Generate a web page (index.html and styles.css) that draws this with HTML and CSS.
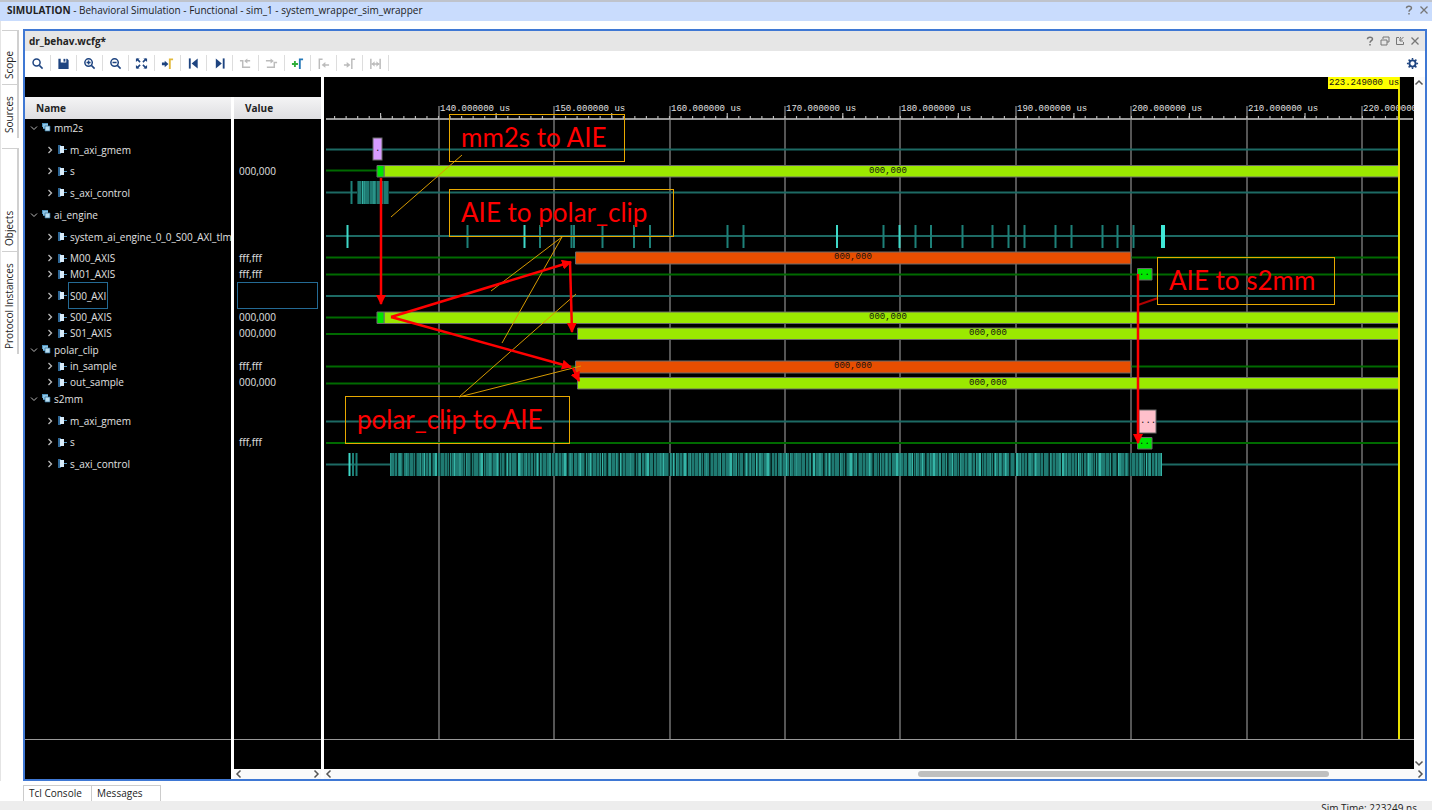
FILE: index.html
```html
<!DOCTYPE html>
<html lang="en">
<head>
<meta charset="utf-8">
<title>Behavioral Simulation</title>
<link rel="stylesheet" href="styles.css">
</head>
<body>
<svg class="defs" aria-hidden="true">
  <symbol id="i-down" viewBox="0 0 10 10"><path d="M2 3.5l3 3 3-3" fill="none" stroke="currentColor"/></symbol>
  <symbol id="i-right" viewBox="0 0 10 10"><path d="M3.500 2l3 3-3 3" fill="none" stroke="currentColor" stroke-width="1.300"/></symbol>
  <symbol id="i-group" viewBox="0 0 9 9"><path d="M0 0h6v2H3v4H1V4H0z" fill="#4f93bd"/><path d="M1 1h5v4H1z" fill="#8cc4e6"/><path d="M3 3h5v5H3z" fill="#b9def2" stroke="#2d6a94" stroke-width=".7"/></symbol>
  <symbol id="i-bus" viewBox="0 0 9 9"><path d="M0 0h3v9H0z" fill="#2f6795"/><path d="M2 1h4v7H2z" fill="#d9ecfa"/><path d="M6 4h3v1H6z" fill="#4f93bd"/></symbol>
  <symbol id="i-x" viewBox="0 0 10 10"><path d="M1.500 1.500l7 7M8.500 1.500l-7 7" stroke="currentColor" stroke-width="1.300"/></symbol>
  <symbol id="i-help" viewBox="0 0 10 10"><path d="M2.500 3.200C2.500.5 7.500.5 7.500 3 7.500 4.700 5 4.700 5 6.800M5 8v1.500" fill="none" stroke="currentColor" stroke-width="1.500"/></symbol>
</svg>

<header class="app-title">
  <h1><b>SIMULATION</b> - Behavioral Simulation - Functional - sim_1 - system_wrapper_sim_wrapper</h1>
  <button class="win" aria-label="Help"><svg><use href="#i-help"/></svg></button>
  <button class="win" aria-label="Close"><svg><use href="#i-x"/></svg></button>
</header>

<div class="workspace">
  <nav class="rail" aria-label="Side panels">
    <button class="vtab short">Scope</button>
    <button class="vtab short">Sources</button>
    <button class="vtab long split">Objects</button>
    <button class="vtab long">Protocol Instances</button>
  </nav>

  <main class="panel">
    <header class="panel-title">
      <h2>dr_behav.wcfg*</h2>
      <button class="win" aria-label="Help"><svg><use href="#i-help"/></svg></button>
      <button class="win" aria-label="Restore"><svg viewBox="0 0 10 10"><path d="M3 3V1h6v5H7M1 4h6v5H1z" fill="none" stroke="currentColor"/></svg></button>
      <button class="win" aria-label="Float"><svg viewBox="0 0 10 10"><path d="M4 1.500H1.500v7h7V6M5 1.500h1M8.500 1L5 4.500M5 2v3h3" fill="none" stroke="currentColor"/></svg></button>
      <button class="win" aria-label="Close"><svg><use href="#i-x"/></svg></button>
    </header>

    <div class="toolbar" role="toolbar">
      <button aria-label="Find"><svg viewBox="0 0 14 14"><circle cx="6" cy="6" r="3.800"/><path d="M9 9l3.500 3.500"/></svg></button>
      <button aria-label="Save"><svg viewBox="0 0 14 14"><path class="fill" d="M1.500 2H4v4h6V2h1l1.500 1.500V13h-11z"/><path class="fill" d="M7 2h2v3H7z"/></svg></button>
      <button aria-label="Zoom in"><svg viewBox="0 0 14 14"><circle cx="6" cy="6" r="4"/><path d="M9 9l3.500 3.500M3.800 6h4.400M6 3.800v4.400"/></svg></button>
      <button aria-label="Zoom out"><svg viewBox="0 0 14 14"><circle cx="6" cy="6" r="4"/><path d="M9 9l3.500 3.500M3.800 6h4.400"/></svg></button>
      <button aria-label="Zoom fit"><svg viewBox="0 0 14 14"><path d="M2 2l3.500 3.500M12 2L8.500 5.500M2 12l3.500-3.500M12 12L8.500 8.500"/><path class="fill" d="M1 1.500h4l-4 4zM13 1.500H9l4 4zM1 12.500h4l-4-4zM13 12.500H9l4-4z"/></svg></button>
      <button aria-label="Go to cursor"><svg viewBox="0 0 14 14"><path class="fill" d="M1 6h3V4l4 3.500L4 11V9H1z"/><path class="gold" d="M9.500 13V2.500H13"/></svg></button>
      <button aria-label="Previous transition"><svg viewBox="0 0 14 14"><path d="M3 1.500v11" class="thick"/><path class="fill" d="M11.500 1.500v11L5 7z"/></svg></button>
      <button aria-label="Next transition"><svg viewBox="0 0 14 14"><path d="M11.500 1.500v11" class="thick"/><path class="fill" d="M3 1.500v11L9.500 7z"/></svg></button>
      <button aria-label="Previous edge" disabled><svg viewBox="0 0 14 14"><path d="M1 4h3v7h8M7 4h5"/><path class="fill" d="M9 1.500v5.500L5.500 4.200z"/></svg></button>
      <button aria-label="Next edge" disabled><svg viewBox="0 0 14 14"><path d="M1 4h6M2 11h8V6h3"/><path class="fill" d="M6 1.500v5.500l3.500-2.800z"/></svg></button>
      <button aria-label="Add marker"><svg viewBox="0 0 14 14"><path class="green" d="M1 7.500h6.500M4.200 4.200v6.600"/><path class="blue" d="M9.500 13V2.500H13"/></svg></button>
      <button aria-label="Previous marker" disabled><svg viewBox="0 0 14 14"><path d="M2.500 13V2.500H6M8 8.500h5"/><path class="fill" d="M9 5.500v6L5 8.500z"/></svg></button>
      <button aria-label="Next marker" disabled><svg viewBox="0 0 14 14"><path d="M9.500 13V2.500H13M1 8.500h4"/><path class="fill" d="M4 5.500v6l4-3z"/></svg></button>
      <button aria-label="Swap markers" disabled><svg viewBox="0 0 14 14"><path d="M2 2v11M12 2v11M3 7.500h8"/><path class="fill" d="M6 4.500v6l-3-3zM8 4.500v6l3-3z"/></svg></button>
      <button class="gear" aria-label="Settings"><svg viewBox="0 0 14 14"><circle cx="7" cy="7" r="3.300" class="thick"/><path d="M7 1v2M7 11v2M1 7h2M11 7h2M2.800 2.800l1.400 1.400M9.800 9.800l1.400 1.400M11.200 2.800L9.800 4.200M4.200 9.800l-1.400 1.400"/></svg></button>
    </div>

    <div class="content">
      <div class="signals">
        <div class="signals-top"></div>
        <div class="columns">
          <section class="col names">
            <table>
              <thead><tr><th scope="col">Name</th></tr></thead>
              <tbody>
                <tr class="group"><td><div class="cell"><button aria-label="Collapse"><svg><use href="#i-down"/></svg></button><svg class="ico"><use href="#i-group"/></svg><span>mm2s</span></div></td></tr>
                <tr class="tall"><td><div class="cell"><button aria-label="Expand"><svg><use href="#i-right"/></svg></button><svg class="ico"><use href="#i-bus"/></svg><span>m_axi_gmem</span></div></td></tr>
                <tr><td><div class="cell"><button aria-label="Expand"><svg><use href="#i-right"/></svg></button><svg class="ico"><use href="#i-bus"/></svg><span>s</span></div></td></tr>
                <tr class="tall"><td><div class="cell"><button aria-label="Expand"><svg><use href="#i-right"/></svg></button><svg class="ico"><use href="#i-bus"/></svg><span>s_axi_control</span></div></td></tr>
                <tr class="group"><td><div class="cell"><button aria-label="Collapse"><svg><use href="#i-down"/></svg></button><svg class="ico"><use href="#i-group"/></svg><span>ai_engine</span></div></td></tr>
                <tr class="tall"><td><div class="cell"><button aria-label="Expand"><svg><use href="#i-right"/></svg></button><svg class="ico"><use href="#i-bus"/></svg><span>system_ai_engine_0_0_S00_AXI_tlm</span></div></td></tr>
                <tr><td><div class="cell"><button aria-label="Expand"><svg><use href="#i-right"/></svg></button><svg class="ico"><use href="#i-bus"/></svg><span>M00_AXIS</span></div></td></tr>
                <tr><td><div class="cell"><button aria-label="Expand"><svg><use href="#i-right"/></svg></button><svg class="ico"><use href="#i-bus"/></svg><span>M01_AXIS</span></div></td></tr>
                <tr class="tall selected"><td><div class="cell"><button aria-label="Expand"><svg><use href="#i-right"/></svg></button><svg class="ico"><use href="#i-bus"/></svg><span>S00_AXI</span></div></td></tr>
                <tr><td><div class="cell"><button aria-label="Expand"><svg><use href="#i-right"/></svg></button><svg class="ico"><use href="#i-bus"/></svg><span>S00_AXIS</span></div></td></tr>
                <tr><td><div class="cell"><button aria-label="Expand"><svg><use href="#i-right"/></svg></button><svg class="ico"><use href="#i-bus"/></svg><span>S01_AXIS</span></div></td></tr>
                <tr class="group"><td><div class="cell"><button aria-label="Collapse"><svg><use href="#i-down"/></svg></button><svg class="ico"><use href="#i-group"/></svg><span>polar_clip</span></div></td></tr>
                <tr><td><div class="cell"><button aria-label="Expand"><svg><use href="#i-right"/></svg></button><svg class="ico"><use href="#i-bus"/></svg><span>in_sample</span></div></td></tr>
                <tr><td><div class="cell"><button aria-label="Expand"><svg><use href="#i-right"/></svg></button><svg class="ico"><use href="#i-bus"/></svg><span>out_sample</span></div></td></tr>
                <tr class="group"><td><div class="cell"><button aria-label="Collapse"><svg><use href="#i-down"/></svg></button><svg class="ico"><use href="#i-group"/></svg><span>s2mm</span></div></td></tr>
                <tr class="tall"><td><div class="cell"><button aria-label="Expand"><svg><use href="#i-right"/></svg></button><svg class="ico"><use href="#i-bus"/></svg><span>m_axi_gmem</span></div></td></tr>
                <tr><td><div class="cell"><button aria-label="Expand"><svg><use href="#i-right"/></svg></button><svg class="ico"><use href="#i-bus"/></svg><span>s</span></div></td></tr>
                <tr class="tall"><td><div class="cell"><button aria-label="Expand"><svg><use href="#i-right"/></svg></button><svg class="ico"><use href="#i-bus"/></svg><span>s_axi_control</span></div></td></tr>
              </tbody>
            </table>
            <div class="rest"></div>
            <div class="foot tall-foot"></div>
          </section>
          <section class="col values">
            <table>
              <thead><tr><th scope="col">Value</th></tr></thead>
              <tbody>
                <tr class="group"><td></td></tr>
                <tr class="tall"><td></td></tr>
                <tr><td><div class="cell">000,000</div></td></tr>
                <tr class="tall"><td></td></tr>
                <tr class="group"><td></td></tr>
                <tr class="tall"><td></td></tr>
                <tr><td><div class="cell">fff,fff</div></td></tr>
                <tr><td><div class="cell">fff,fff</div></td></tr>
                <tr class="tall selected"><td><div class="cell"></div></td></tr>
                <tr><td><div class="cell">000,000</div></td></tr>
                <tr><td><div class="cell">000,000</div></td></tr>
                <tr class="group"><td></td></tr>
                <tr><td><div class="cell">fff,fff</div></td></tr>
                <tr><td><div class="cell">000,000</div></td></tr>
                <tr class="group"><td></td></tr>
                <tr class="tall"><td></td></tr>
                <tr><td><div class="cell">fff,fff</div></td></tr>
                <tr class="tall"><td></td></tr>
              </tbody>
            </table>
            <div class="rest"></div>
            <div class="foot"></div>
            <div class="hscroll">
              <button aria-label="Scroll left"><svg viewBox="0 0 10 10"><path d="M6.500 1.500L3 5l3.500 3.500"/></svg></button>
              <button aria-label="Scroll right"><svg viewBox="0 0 10 10"><path d="M3.500 1.500L7 5 3.500 8.500"/></svg></button>
            </div>
          </section>
        </div>
      </div>

      <section class="wave">
        <div class="wave-row">
          <div class="wave-view">
            <svg class="plot" role="img" aria-label="Waveforms">
              <defs>
                <marker id="head" markerUnits="userSpaceOnUse" markerWidth="10" markerHeight="10" refX="9" refY="5" orient="auto"><path d="M0 0l10 5-10 5z" fill="#f00"/></marker>
              </defs>
              <g transform="translate(-324 -77)">
                <g class="grid">
                  <path d="M439 106V2000M554 106V2000M670 106V2000M785 106V2000M900 106V2000M1016 106V2000M1131 106V2000M1247 106V2000M1362 106V2000"/>
                </g>
                <g class="ruler">
                  <path class="base" d="M326 119H1413"/>
                  <path class="minor" d="M334 117.500H1408" pathLength="930"/>
                  <path class="major" d="M380 116H1420" pathLength="900"/>
                </g>
                <g class="time">
                  <text x="440" y="111">140.000000 us</text><text x="555" y="111">150.000000 us</text><text x="671" y="111">160.000000 us</text>
                  <text x="786" y="111">170.000000 us</text><text x="901" y="111">180.000000 us</text><text x="1017" y="111">190.000000 us</text>
                  <text x="1132" y="111">200.000000 us</text><text x="1248" y="111">210.000000 us</text><text x="1363" y="111">220.000000 us</text>
                </g>
                <path class="idle-teal" d="M326 149.500H1399M326 192.500H1399M326 236H1399M326 296H1399M326 421.500H1399M326 464.500H1399"/>
                <path class="idle-green" d="M326 170.500H1399M326 257.500H1399M326 274.500H1399M326 317.500H1399M326 334H1399M326 366.500H1399M326 383.500H1399M326 443H1399"/>

                <rect class="box purple" x="373" y="138" width="9" height="22"/><text class="mono" x="375" y="151">.</text>
                <g class="bars">
                  <path class="lime" d="M384 165.500H1399V177H384zM384 312H1399V323.500H384zM577.500 328H1399V339.500H577.500zM577.500 377.500H1399V389H577.500z"/>
                  <path class="orange" d="M575.500 252H1131V264H575.500zM575.500 361H1131V373H575.500z"/>
                  <path class="green" d="M377 165.500h7V177h-7zM377 312h7v11.500h-7zM1137.500 268.500H1152V280h-14.500zM1137.500 437.500H1152V449h-14.500z"/>
                  <rect class="box pink" x="1139" y="410" width="17" height="23"/>
                </g>
                <g class="mono">
                  <text x="869" y="173">000,000</text><text x="834" y="259">000,000</text><text x="869" y="319">000,000</text>
                  <text x="969" y="335">000,000</text><text x="834" y="368">000,000</text><text x="969" y="385">000,000</text>
                  <text x="1139" y="275">..</text><text x="1139" y="444">..</text><text x="1140" y="423">...</text>
                </g>

                <path class="ev" d="M351.500 181v23M467.500 225v23M540 225v23M602.500 225v23M634 225v23M650 225v23M727.500 225v23M743.500 225v23M883.500 225v23M915.500 225v23M931 225v23M962.500 225v23M992.500 225v23M1008.500 225v23M1024.500 225v23M1055.500 225v23M1071.500 225v23M1102.500 225v23M1117.500 225v23M1133.500 225v23M571.500 225v23M574 225v23M353 453v23M356.500 453v23"/>
                <path class="ev bright" d="M347.500 225v23M524.500 225v23M837 225v23M899.500 225v23M349.500 453v23"/>
                <rect class="pulse" x="1161" y="225" width="4" height="23"/>
                <g class="burst">
                  <path class="b0" d="M357 192.500H389M390 464.500H1162"/>
                  <path class="b1" d="M357 192.500H389M390 464.500H1162"/>
                  <path class="b2" d="M364 192.500H389M390 464.500H1162"/>
                  <path class="b3" d="M362 192.500h1M424 464.500H1162"/>
                  <path class="b4" d="M390 464.500H1162"/>
                </g>

                <path class="cursor" d="M1399 77V2000"/>
                <rect class="cursor-label" x="1328" y="77" width="71" height="12"/>
                <text class="mono" x="1329" y="85">223.249000 us</text>

                <path class="leader" d="M391 217L462 155M491 291L562 237L502 343M576 294L459 397L581 366"/>
                <path class="leader red" d="M1138 305L1158 298"/>
                <g class="arrow">
                  <path d="M381 178V304"/><path d="M391 317L571 262"/><path d="M391 317L571 367"/>
                  <path d="M570 262L572 332"/><path d="M573 368L579 381"/><path d="M1138 274V443"/>
                </g>
                <g class="callout">
                  <rect x="449.500" y="114.500" width="175" height="47"/><text x="461" y="147">mm2s to AIE</text>
                  <rect x="449.500" y="189.500" width="224" height="47"/><text x="461" y="222">AIE to polar_clip</text>
                  <rect x="345.500" y="396.500" width="224" height="47"/><text x="357" y="429">polar_clip to AIE</text>
                  <rect x="1157.500" y="257.500" width="177" height="47"/><text x="1169" y="290">AIE to s2mm</text>
                </g>
              </g>
            </svg>
            <div class="foot"></div>
          </div>
          <div class="vscroll">
            <button aria-label="Scroll up"><svg viewBox="0 0 10 10"><path d="M1.500 6.500L5 3l3.500 3.500"/></svg></button>
            <button aria-label="Scroll down"><svg viewBox="0 0 10 10"><path d="M1.500 3.500L5 7l3.500-3.500"/></svg></button>
          </div>
        </div>
        <div class="hscroll">
          <button aria-label="Scroll left"><svg viewBox="0 0 10 10"><path d="M6.500 1.500L3 5l3.500 3.500"/></svg></button>
          <div class="track"><div class="thumb"></div></div>
          <button aria-label="Scroll right"><svg viewBox="0 0 10 10"><path d="M3.500 1.500L7 5 3.500 8.500"/></svg></button>
        </div>
      </section>
    </div>
  </main>
</div>

<nav class="bottom-tabs" aria-label="Bottom panels">
  <button>Tcl Console</button>
  <button>Messages</button>
</nav>
<footer class="status">Sim Time: 223249 ns</footer>
</body>
</html>
```

FILE: styles.css
```css
* { box-sizing: border-box; }

body {
  margin: 0;
  height: 100vh;
  display: flex;
  flex-direction: column;
  overflow: hidden;
  background: #fff;
  color: #222;
  font: 10px/14px "Open Sans", "Noto Sans", sans-serif;
}

button {
  margin: 0;
  padding: 0;
  border: 0;
  background: none;
  color: inherit;
  font: inherit;
}

button svg { display: block; }
h1, h2 { margin: 0; font-size: inherit; }
.defs { display: none; }

.app-title {
  display: flex;
  align-items: center;
  gap: 5px;
  height: 21px;
  padding: 0 3px 3px 7px;
  border-top: 2px solid #bfc3cb;
  background: #c9dcfd;
}
.app-title h1 { flex: 1; font-weight: normal; }
.win { color: #777; }
.win svg { width: 10px; height: 10px; }

.workspace {
  flex: 1;
  min-height: 0;
  display: flex;
  padding: 8px 5px 0 0;
  border-left: 1px solid #e4e4e4;
}

.rail { flex: none; width: 22px; padding: 1px 4px 0 1px; }
.vtab {
  display: flex;
  align-items: center;
  width: 17px;
  padding: 5px 0;
  border: 1px solid #d0d0d0;
  border-width: 0 0 1px 2px;
  writing-mode: vertical-rl;
  transform: rotate(180deg);
  line-height: 15px;
}
.short { height: 54px; }
.long { height: 103px; }
.split { margin-top: 10px; }

.panel {
  flex: 1;
  min-width: 0;
  display: flex;
  flex-direction: column;
  border: 2px solid #3f78d4;
}

.panel-title {
  display: flex;
  align-items: center;
  gap: 5px;
  height: 20px;
  padding: 0 5px 1px 4px;
  background: #e6e6e6;
}
.panel-title h2 { flex: 1; }

.toolbar { display: flex; align-items: center; height: 26px; padding-bottom: 2px; }
.toolbar button {
  display: grid;
  place-items: center;
  width: 26px;
  height: 16px;
  border-right: 1px solid #ddd;
}
.toolbar svg {
  width: 13px;
  height: 13px;
  fill: none;
  stroke: #1e4480;
  stroke-width: 1.6;
}
.toolbar .fill { fill: #1e4480; stroke: none; }
.toolbar .thick { stroke-width: 2; }
.toolbar .gold { stroke: #e2b93b; stroke-width: 2; }
.toolbar .green { stroke: #2fae3a; stroke-width: 2; }
.toolbar .blue { stroke: #2478b8; stroke-width: 2; }
.toolbar button:disabled svg { stroke: #bcbcbc; }
.toolbar button:disabled .fill { fill: #bcbcbc; }
.toolbar .gear { margin-left: auto; border: 0; }

.content { flex: 1; min-height: 0; display: flex; gap: 3px; }

.signals { flex: none; width: 296px; display: flex; flex-direction: column; }
.signals-top { height: 20px; background: #000; }
.columns { flex: 1; display: flex; gap: 3px; }
.col { display: flex; flex-direction: column; }
.names { flex: none; width: 206px; }
.values { flex: 1; }

table { width: 100%; border-collapse: collapse; table-layout: fixed; background: #000; color: #e0e0e0; }
th {
  height: 22px;
  padding: 0 11px 1px;
  background: linear-gradient(#f4f4f5, #dedee1);
  color: #222;
  text-align: left;
}
td { height: 16px; padding: 0; overflow: hidden; }
.group td { height: 17px; }
.tall td { height: 27px; }
.cell { display: flex; align-items: center; height: 16px; }
.tall .cell { height: 27px; }
.names .cell { padding-left: 20px; white-space: nowrap; }
.names .group .cell { padding-left: 4px; }
.names button { margin-right: 3px; color: #bbb; }
.names button svg { width: 10px; height: 10px; }
.ico { flex: none; width: 9px; height: 9px; margin-right: 1px; }
.names span { padding: 0 2px; }
.values .cell { padding-left: 5px; }
.selected span {
  align-self: stretch;
  display: flex;
  align-items: center;
  border: 1px solid #246a94;
  padding: 0 1px;
}
.values .selected .cell { margin: 0 3px; border: 1px solid #246a94; }

.rest { flex: 1; background: #000; border-bottom: 1px solid #999; }
.foot { height: 29px; background: #000; }
.tall-foot { height: 39px; }

.wave { flex: 1; min-width: 0; display: flex; flex-direction: column; }
.wave-row { flex: 1; min-height: 0; display: flex; }
.wave-view { flex: 1; min-width: 0; display: flex; flex-direction: column; background: #000; }
.plot { flex: 1; min-height: 0; width: 100%; border-bottom: 1px solid #999; }

.hscroll { display: flex; align-items: center; justify-content: space-between; height: 10px; background: #fafafa; }
.vscroll { display: flex; flex-direction: column; justify-content: space-between; width: 11px; padding: 1px 0; background: #fafafa; }
.hscroll svg, .vscroll svg { width: 10px; height: 10px; fill: none; stroke: #555; stroke-width: 1.5; }
.track { flex: 1; display: flex; }
.thumb { width: 38%; height: 6px; margin-left: 54%; border-radius: 3px; background: #bfbfbf; }

.grid { stroke: #555; stroke-width: 2; }
.ruler { fill: none; stroke: #bbb; }
.base { stroke: #999; stroke-width: 2; }
.minor { stroke-width: 3; stroke-dasharray: 1 9; }
.major { stroke-width: 6; stroke-dasharray: 1 99; }
.time, .mono { font: 9px "Liberation Mono", "DejaVu Sans Mono", monospace; }
.time { fill: #e0e0e0; }
.mono { fill: #111; }
.idle-teal { stroke: #1d6a64; stroke-width: 2; }
.idle-green { stroke: #006a00; stroke-width: 2; }
.bars path, .box { stroke: #6a6a6a; stroke-width: 1; }
.lime { fill: #9be900; }
.orange { fill: #e84e00; }
.green { fill: #00e600; }
.purple { fill: #d79cff; }
.pink { fill: #ffc0cb; }
.ev { stroke: #1d8078; stroke-width: 2; }
.bright { stroke: #3fd8c8; }
.pulse { fill: #40e8d8; }
.burst path { stroke-width: 23; }
.b0 { stroke: #1f7a72; }
.b1 { stroke: #0f4843; stroke-dasharray: 1 3 1 2 1 4 1 3 1 2; }
.b2 { stroke: #2a9489; stroke-dasharray: 1 8 2 5 1 13; }
.b3 { stroke: #35b5a7; stroke-dasharray: 1 10 2 17 1 26 2 14 1 9; }
.b4 { stroke: #06231f; stroke-dasharray: 0 7 1 5 1 11 1 8; }
.cursor { stroke: #e8e000; stroke-width: 2; }
.cursor-label { fill: #ff0; }
.leader { fill: none; stroke: #d69a00; stroke-width: 1; }
.leader.red { stroke: #b00000; stroke-width: 2; }
.arrow path { stroke: #f00; stroke-width: 2.5; marker-end: url(#head); }
.callout rect { fill: none; stroke: #e8a800; stroke-width: 1; }
.callout text { fill: #f00; font: 26px Lato, sans-serif; }

.bottom-tabs { display: flex; height: 20px; padding: 4px 0 0 23px; }
.bottom-tabs button {
  width: 69px;
  padding: 0 0 2px 5px;
  border: 1px solid #ccc;
  border-width: 1px 1px 0 0;
  text-align: left;
}
.bottom-tabs button:first-child { border-left-width: 1px; }
.status { height: 9px; padding: 0 15px 0 0; background: #ededed; text-align: right; }
```
